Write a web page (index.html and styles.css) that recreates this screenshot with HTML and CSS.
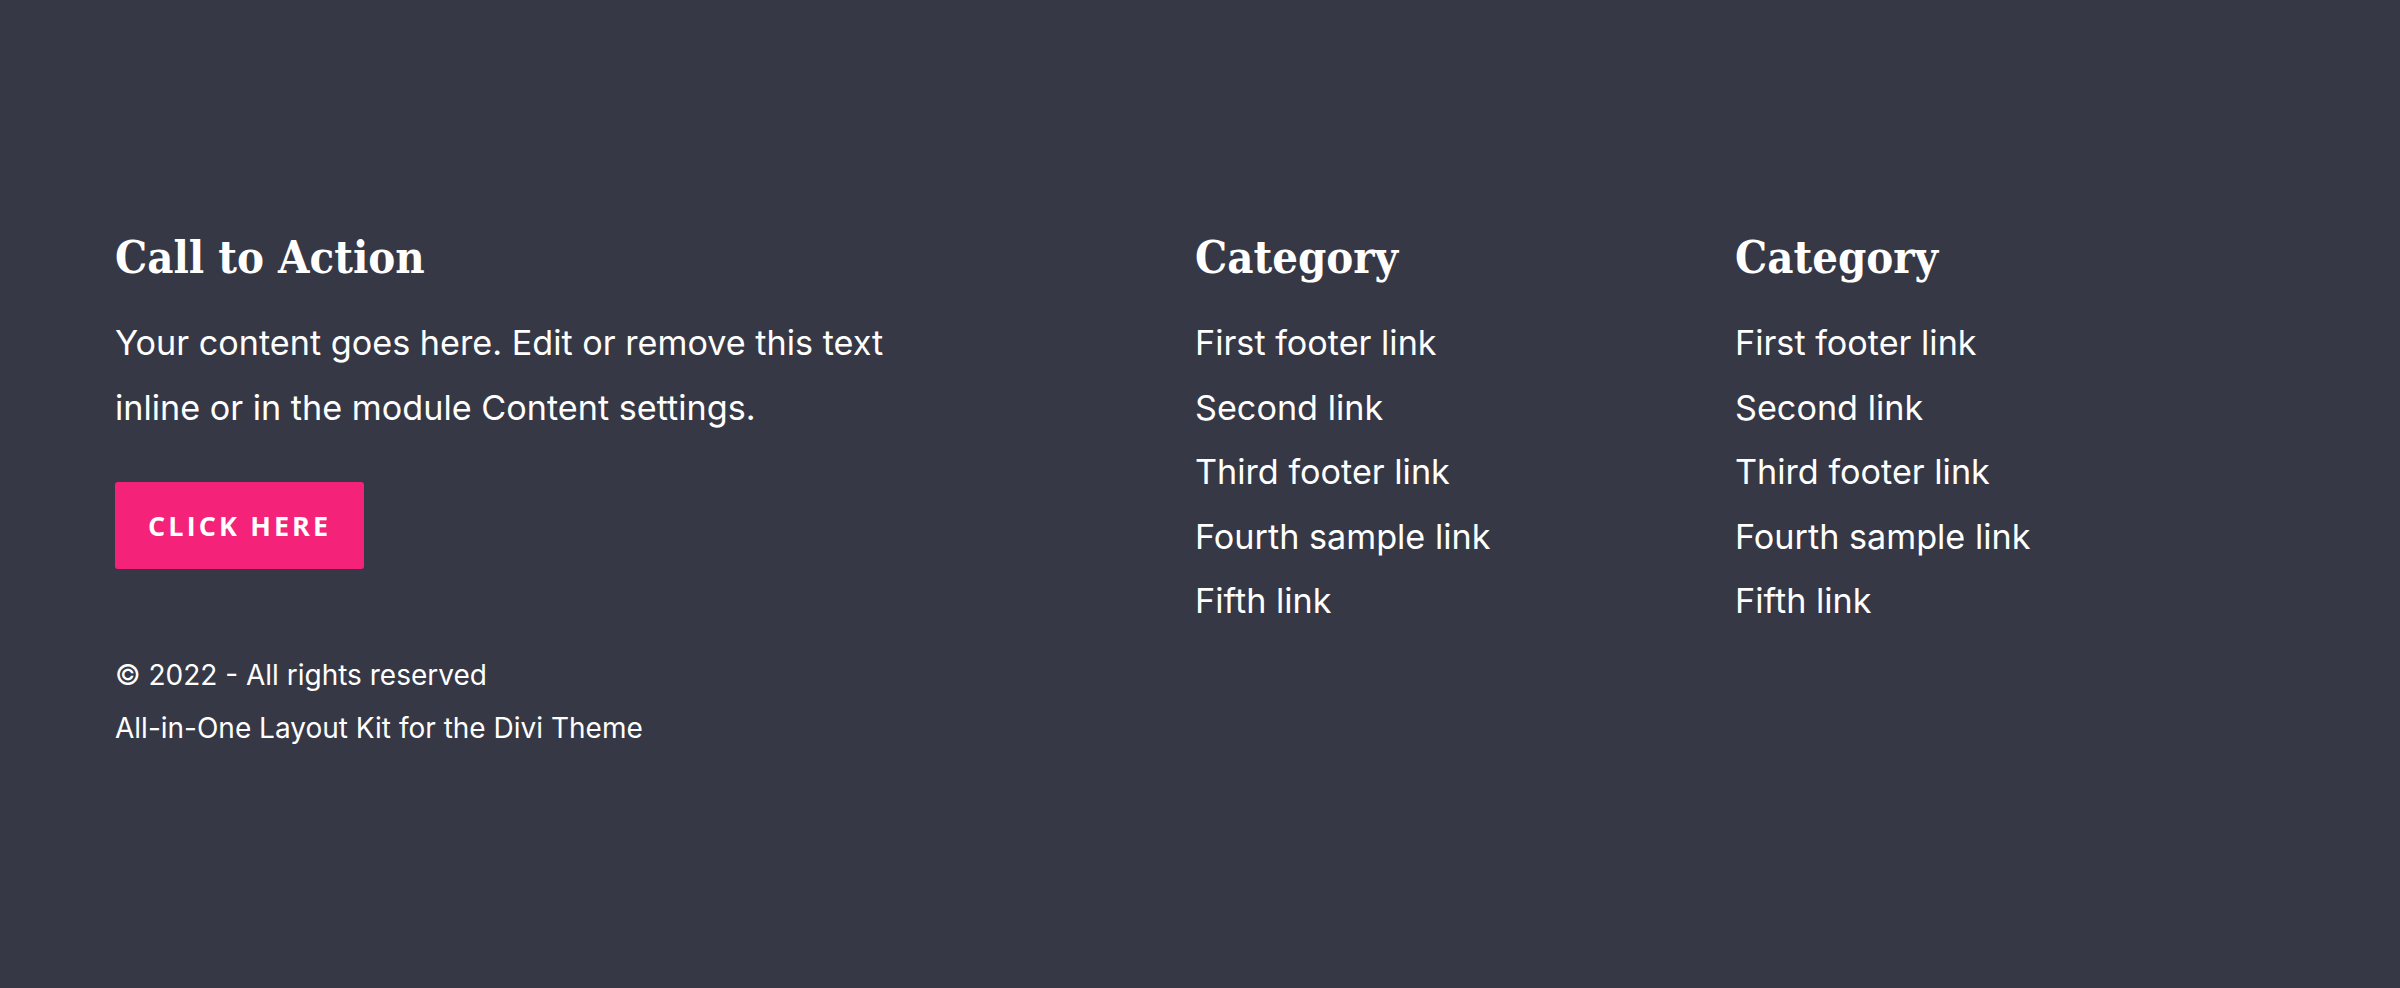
FILE: index.html
```html
<!DOCTYPE html>
<html lang="en">
<head>
<meta charset="utf-8">
<title>Footer</title>
<link rel="stylesheet" href="styles.css">
</head>
<body>
<footer class="footer">
  <div class="row">
    <div class="col col-cta">
      <h4 class="title">Call to Action</h4>
      <p class="text">Your content goes here. Edit or remove this text inline or in the module Content settings.</p>
      <a class="button" href="#">CLICK HERE</a>
      <div class="legal">
        <p>© 2022 - All rights reserved</p>
        <p>All-in-One Layout Kit for the Divi Theme</p>
      </div>
    </div>
    <div class="col">
      <h4 class="title">Category</h4>
      <ul class="links">
        <li><a href="#">First footer link</a></li>
        <li><a href="#">Second link</a></li>
        <li><a href="#">Third footer link</a></li>
        <li><a href="#">Fourth sample link</a></li>
        <li><a href="#">Fifth link</a></li>
      </ul>
    </div>
    <div class="col">
      <h4 class="title">Category</h4>
      <ul class="links">
        <li><a href="#">First footer link</a></li>
        <li><a href="#">Second link</a></li>
        <li><a href="#">Third footer link</a></li>
        <li><a href="#">Fourth sample link</a></li>
        <li><a href="#">Fifth link</a></li>
      </ul>
    </div>
  </div>
</footer>
</body>
</html>
```
FILE: styles.css
```css
html, body {
  margin: 0;
  padding: 0;
  background: #373845;
}
body {
  min-height: 988px;
  font-family: "Inter", "Liberation Sans", sans-serif;
  color: #ffffff;
}
.footer {
  padding: 231px 0 0 115px;
}
.row {
  display: grid;
  grid-template-columns: 1080px 540px 540px;
}
.col {
  display: flex;
  flex-direction: column;
  align-items: flex-start;
}
.title {
  margin: 0;
  font-family: "DejaVu Serif Condensed", "DejaVu Serif", serif;
  font-stretch: condensed;
  font-weight: 700;
  font-size: 45px;
  line-height: 54px;
  color: #ffffff;
}
.text {
  margin: 26px 0 0 0;
  max-width: 800px;
  font-size: 34.2px;
  line-height: 64.6px;
  font-weight: 400;
}
.button {
  display: flex;
  align-items: center;
  height: 87px;
  box-sizing: border-box;
  margin-top: 42px;
  padding: 0 33px;
  background: #f52279;
  border-radius: 3px;
  font-family: "Open Sans", "Liberation Sans", sans-serif;
  font-weight: 700;
  font-size: 27px;
  letter-spacing: 3.1px;
  color: #ffffff;
  text-decoration: none;
}
.legal {
  margin-top: 80px;
  font-size: 28px;
  line-height: 53px;
}
.legal p {
  margin: 0;
}
.links {
  list-style: none;
  margin: 26px 0 0 0;
  padding: 0;
  font-size: 34.2px;
  line-height: 64.5px;
}
.links a {
  color: #ffffff;
  text-decoration: none;
}
```
